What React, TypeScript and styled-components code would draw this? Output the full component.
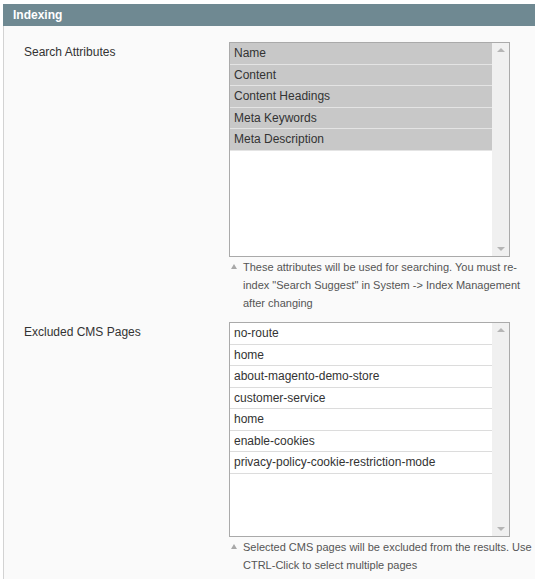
import styled, { createGlobalStyle } from 'styled-components'

const GlobalStyle = createGlobalStyle`
  body {
    margin: 0;
    background: #ffffff;
    font-family: "Liberation Sans", Arial, sans-serif;
    font-size: 12px;
    color: #333;
  }
`;

const StyledSection = styled.section`
  margin: 4px 0 0 3px;
  height: 575px;
  display: flex;
  flex-direction: column;
`;

const StyledHeader = styled.header`
  height: 22px;
  background: #6f8992;
  color: #ffffff;
  font-weight: bold;
  font-size: 12px;
  line-height: 22px;
  padding-left: 10px;
`;

const StyledFieldset = styled.div`
  flex: 1;
  background: #fafafa;
  border-left: 1px solid #d3d3d3;
  padding: 16px 0 0 20px;
  display: flex;
  flex-direction: column;
  gap: 10px;
`;

const StyledRow = styled.div`
  display: grid;
  grid-template-columns: 205px 306px;
`;

const StyledLabel = styled.div`
  padding-top: 3px;
  line-height: 14px;
  color: #333;
`;

const StyledSelect = styled.div`
  width: 281px;
  height: 215px;
  box-sizing: border-box;
  border: 1px solid #aaaaaa;
  background: #ffffff;
  display: flex;
`;

const StyledList = styled.div`
  flex: 1;
`;

const StyledOption = styled.div<{ $selected?: boolean }>`
  height: 21.5px;
  box-sizing: border-box;
  padding-left: 4px;
  line-height: 20.5px;
  color: #333;
  background: ${(p) => (p.$selected ? '#c8c8c8' : '#ffffff')};
  border-bottom: 1px solid ${(p) => (p.$selected ? '#e4e4e4' : '#dcdcdc')};
  white-space: nowrap;
`;

const StyledScrollbar = styled.div`
  width: 17px;
  background: #f0f0f0;
  display: flex;
  flex-direction: column;
  justify-content: space-between;
  align-items: center;
  padding: 5px 0;
`;

const StyledArrow = styled.span<{ $down?: boolean }>`
  width: 0;
  height: 0;
  border-left: 4px solid transparent;
  border-right: 4px solid transparent;
  ${(p) =>
    p.$down
      ? 'border-top: 4px solid #b5b5b5;'
      : 'border-bottom: 4px solid #b5b5b5;'}
`;

const StyledNote = styled.div`
  display: flex;
  gap: 6px;
  margin-top: 1px;
  padding-left: 2px;
  font-size: 11px;
  line-height: 18px;
  color: #555;
`;

const StyledNoteIcon = styled.span`
  flex: none;
  width: 0;
  height: 0;
  margin-top: 6px;
  border-left: 3px solid transparent;
  border-right: 3px solid transparent;
  border-bottom: 5px solid #a8a8a8;
`;

const attributes = ['Name', 'Content', 'Content Headings', 'Meta Keywords', 'Meta Description'];
const pages = [
  'no-route',
  'home',
  'about-magento-demo-store',
  'customer-service',
  'home',
  'enable-cookies',
  'privacy-policy-cookie-restriction-mode',
];

function MultiSelect({ items, selected }: { items: string[]; selected?: boolean }) {
  return (
    <StyledSelect>
      <StyledList>
        {items.map((item, i) => (
          <StyledOption key={i} $selected={selected}>{item}</StyledOption>
        ))}
      </StyledList>
      <StyledScrollbar>
        <StyledArrow />
        <StyledArrow $down />
      </StyledScrollbar>
    </StyledSelect>
  );
}

function App() {
  return (
    <>
      <GlobalStyle />
      <StyledSection>
        <StyledHeader>Indexing</StyledHeader>
        <StyledFieldset>
          <StyledRow>
            <StyledLabel>Search Attributes</StyledLabel>
            <div>
              <MultiSelect items={attributes} selected />
              <StyledNote>
                <StyledNoteIcon />
                <span>
                  These attributes will be used for searching. You must re-index "Search Suggest" in System -&gt; Index Management after changing
                </span>
              </StyledNote>
            </div>
          </StyledRow>
          <StyledRow>
            <StyledLabel>Excluded CMS Pages</StyledLabel>
            <div>
              <MultiSelect items={pages} />
              <StyledNote>
                <StyledNoteIcon />
                <span>
                  Selected CMS pages will be excluded from the results. Use CTRL-Click to select multiple pages
                </span>
              </StyledNote>
            </div>
          </StyledRow>
        </StyledFieldset>
      </StyledSection>
    </>
  )
}

export default App
